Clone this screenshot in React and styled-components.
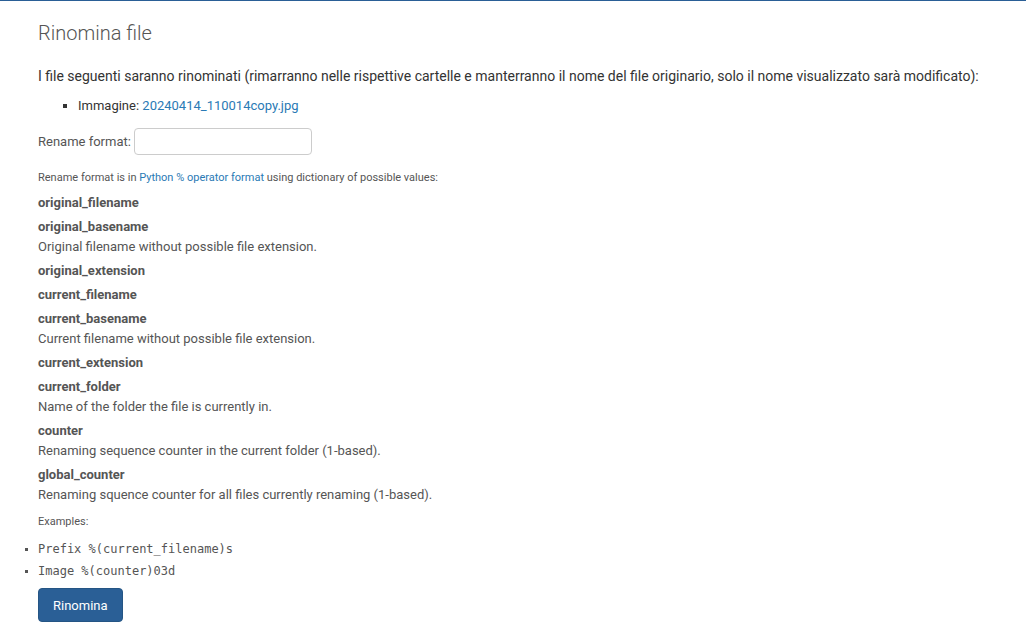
import styled, { createGlobalStyle } from "styled-components";

const GlobalStyle = createGlobalStyle`
  html, body {
    margin: 0;
    padding: 0;
    background: #fff;
  }
  body {
    font-family: Roboto, "Liberation Sans", sans-serif;
    color: #555;
    border-top: 1px solid #2a5f96;
  }
`;

const Page = styled.div`
  padding: 19px 38px 16px;
`;

const Title = styled.h1`
  margin: 0 0 18px;
  font-size: 20px;
  font-weight: 300;
  color: #555;
  line-height: 26px;
`;

const Intro = styled.p`
  margin: 0 0 8px;
  font-size: 14px;
  line-height: 24px;
  color: #333;
`;

const FileList = styled.ul`
  margin: 0 0 12px;
  padding-left: 40px;
  list-style: square;
  font-size: 13px;
  line-height: 20px;
  color: #333;
`;

const Link = styled.a`
  color: #2a7ab5;
  text-decoration: none;
`;

const FormRow = styled.div`
  display: flex;
  align-items: center;
  gap: 3px;
  font-size: 13px;
  color: #555;
`;

const Input = styled.input`
  width: 178px;
  height: 27px;
  box-sizing: border-box;
  border: 1px solid #ccc;
  border-radius: 4px;
  outline: none;
`;

const Help = styled.p`
  margin: 15px 0 7px;
  font-size: 11px;
  line-height: 16px;
  color: #555;
`;

const Dict = styled.dl`
  margin: 0 0 4px;
  font-size: 13px;
  line-height: 20px;
`;

const Term = styled.dt`
  margin-top: 4px;
  font-weight: 700;
  color: #555;
`;

const Desc = styled.dd`
  margin: 0;
  color: #555;
`;

const Small = styled.p`
  margin: 9px 0 8px;
  font-size: 11px;
  line-height: 16px;
`;

const Examples = styled.ul`
  margin: 0 0 6px;
  padding-left: 0;
  list-style: square;
  font-family: "DejaVu Sans Mono", "Liberation Mono", monospace;
  font-size: 12px;
  line-height: 22px;
  color: #555;
  li::marker {
    font-size: 10px;
  }
`;

const Button = styled.button`
  height: 34px;
  padding: 0 14px;
  border: 1px solid #255584;
  border-radius: 4px;
  background: #2a5f96;
  color: #fff;
  font-family: Roboto, "Liberation Sans", sans-serif;
  font-size: 13px;
`;

const vars = [
  ["original_filename"],
  ["original_basename", "Original filename without possible file extension."],
  ["original_extension"],
  ["current_filename"],
  ["current_basename", "Current filename without possible file extension."],
  ["current_extension"],
  ["current_folder", "Name of the folder the file is currently in."],
  ["counter", "Renaming sequence counter in the current folder (1-based)."],
  ["global_counter", "Renaming squence counter for all files currently renaming (1-based)."],
];

export default function App() {
  return (
    <Page>
      <GlobalStyle />
      <Title>Rinomina file</Title>
      <Intro>
        I file seguenti saranno rinominati (rimarranno nelle rispettive cartelle e manterranno il nome del file originario, solo il nome visualizzato sarà modificato):
      </Intro>
      <FileList>
        <li>
          Immagine: <Link href="#">20240414_110014copy.jpg</Link>
        </li>
      </FileList>
      <FormRow>
        <label>Rename format:</label>
        <Input type="text" />
      </FormRow>
      <Help>
        Rename format is in <Link href="#">Python % operator format</Link> using dictionary of possible values:
      </Help>
      <Dict>
        {vars.map(([name, desc]) => (
          <div key={name}>
            <Term>{name}</Term>
            {desc && <Desc>{desc}</Desc>}
          </div>
        ))}
      </Dict>
      <Small>Examples:</Small>
      <Examples>
        <li>Prefix %(current_filename)s</li>
        <li>Image %(counter)03d</li>
      </Examples>
      <Button>Rinomina</Button>
    </Page>
  );
}
